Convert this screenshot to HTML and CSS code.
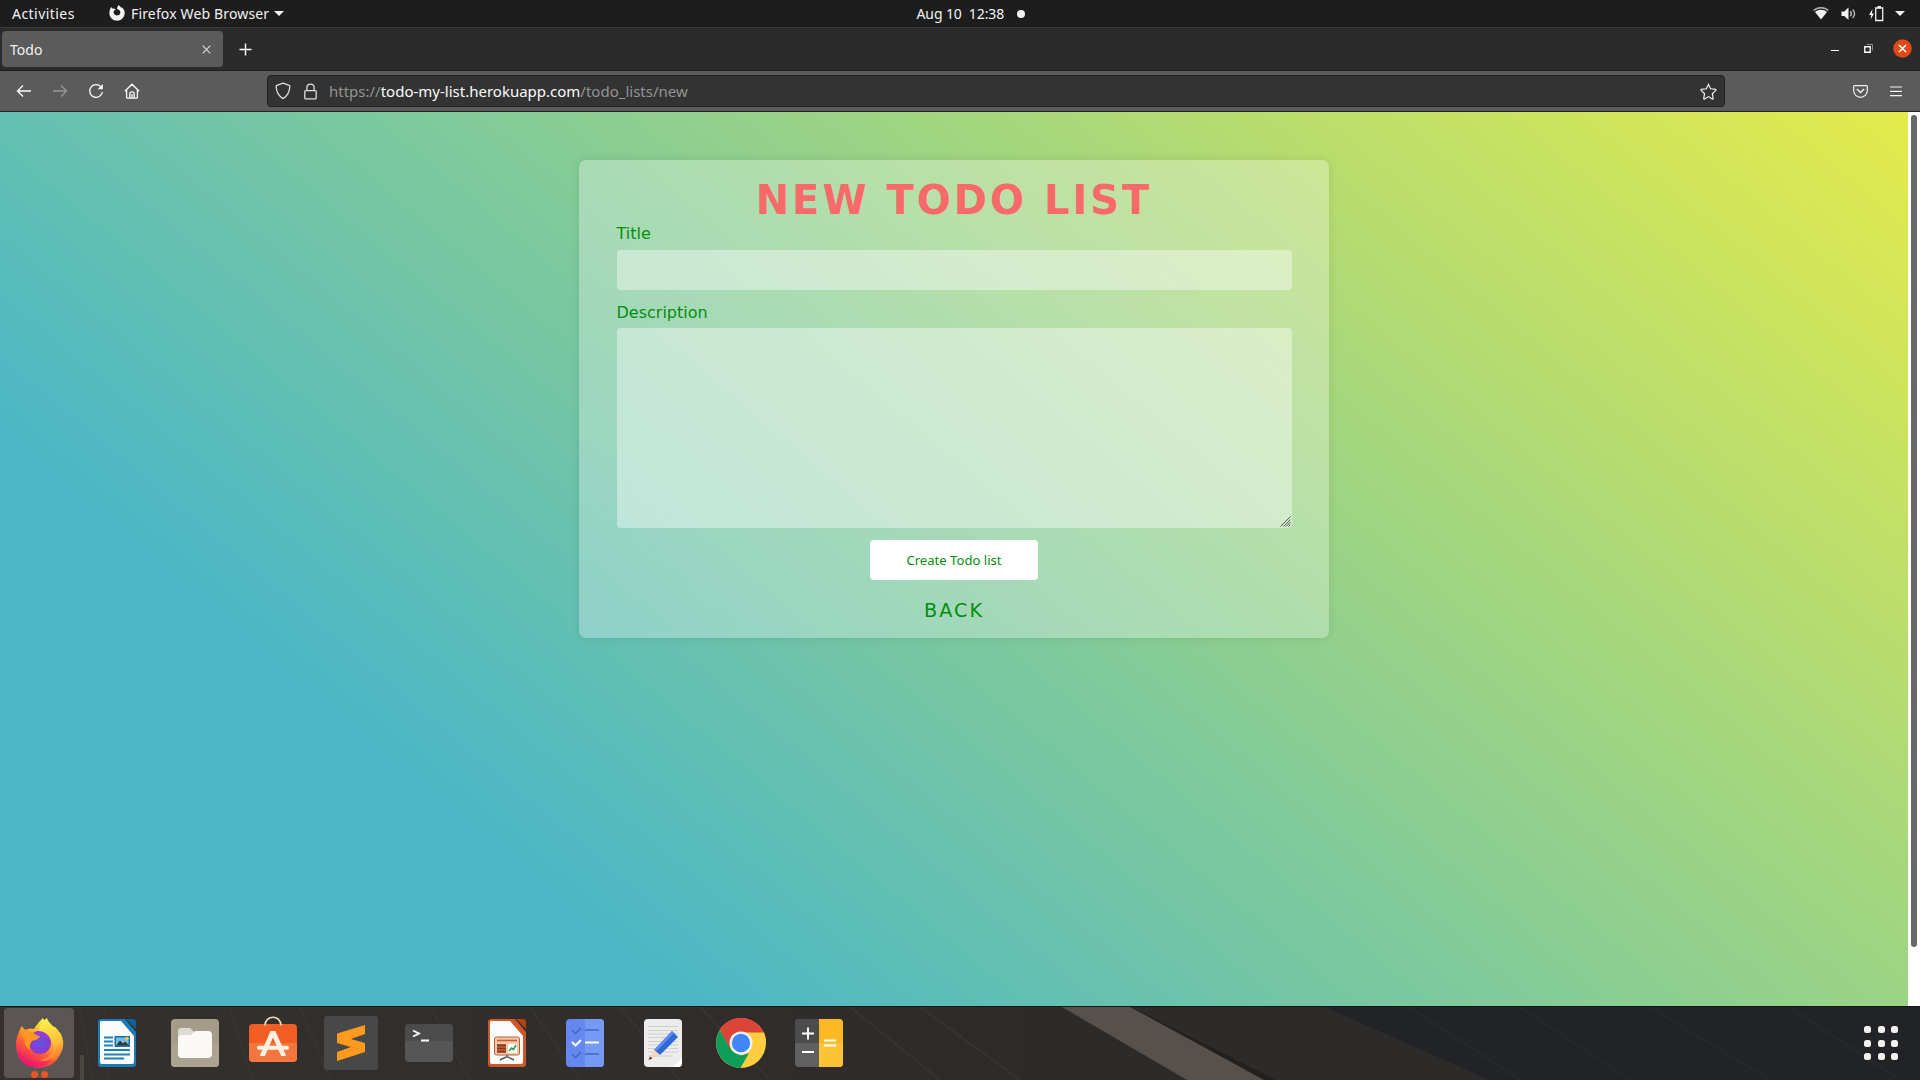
FILE: index.html
```html
<!DOCTYPE html>
<html lang="en">
<head>
<meta charset="utf-8">
<title>Todo</title>
<link rel="stylesheet" href="styles.css">
</head>
<body>
<div class="desktop">
  <header class="topbar">
    <div class="topbar-left">
      <span class="activities">Activities</span>
      <svg class="fox-glyph" width="16" height="16" viewBox="0 0 16 16"><path fill="#f2f2f2" fill-rule="evenodd" d="M8.2 2.5 9.6 0l2.2 2.2 1.5.6c1.700 1.400 2.500 3.500 2.400 5.500-.2 4.200-3.600 7.500-7.700 7.500S.4 12.500.4 8.300C.4 6 1 4 2.200 2.100l1 1.500 1.900-.2 1.700 1.400-1.900 1c-1 2.300.7 4.700 3.100 4.700 3 0 4.300-3 2.500-5.200L8.200 4z"/></svg>
      <span class="app-name">Firefox Web Browser</span>
      <span class="caret"></span>
    </div>
    <div class="clock"><span class="clock-date">Aug 10&nbsp; 12:38</span><span class="clock-dot"></span></div>
    <div class="tray">
      <svg width="16" height="14" viewBox="0 0 16 14"><path d="M.5 3.500C5-.3 11-.3 15.500 3.500" fill="none" stroke="#aaa" stroke-width="1.600"/><path d="M2 5c3.600-2.900 8.400-2.900 12 0l-6 7.500z" fill="#f2f2f2"/></svg>
      <svg width="16" height="14" viewBox="0 0 16 14"><path d="M.5 4.500h2.800L7.500.5v12.500L3.300 9H.5z" fill="#f2f2f2"/><path d="M9.300 4.300c1.300 1.500 1.300 3.500 0 5M11.600 2.500c2.600 2.400 2.600 6.200 0 8.600" fill="none" stroke="#bbb" stroke-width="1.400"/></svg>
      <svg width="15" height="16" viewBox="0 0 15 16"><path d="M3.500 3 0 9h2.200l-.6 4.500L5 7.500H2.900z" fill="#f2f2f2"/><path d="M6.700 2h7v12.500h-7zM8.500.7h3.400" fill="none" stroke="#f2f2f2" stroke-width="1.300"/></svg>
      <span class="caret"></span>
    </div>
  </header>

  <div class="tabstrip">
    <div class="tab"><span>Todo</span><svg width="9" height="9" viewBox="0 0 9 9"><path d="M.7.7l7.600 7.600M8.300.7.7 8.300" stroke="#ddd" stroke-width="1.100"/></svg></div>
    <svg class="newtab" width="13" height="13" viewBox="0 0 13 13"><path d="M6.500.5v12M.5 6.500h12" stroke="#fff" stroke-width="1.400"/></svg>
    <div class="window-buttons">
      <span class="minimize"></span>
      <svg width="9" height="9" viewBox="0 0 9 9"><path d="M2.500.5h6v6" fill="none" stroke="#888"/><path d="M.75 2.750h5.500v5.500H.75z" fill="none" stroke="#fff" stroke-width="1.300"/></svg>
      <svg width="19" height="19" viewBox="0 0 19 19"><circle cx="9.500" cy="9.500" r="9.300" fill="#e0491a"/><path d="M6 6l7 7M13 6l-7 7" stroke="#fff" stroke-width="1.500"/></svg>
    </div>
  </div>

  <div class="toolbar">
    <div class="nav">
      <svg width="16" height="16" viewBox="0 0 16 16"><path d="M15 8H1.500M7 2.500 1.500 8 7 13.500" fill="none" stroke="#fbfbfb" stroke-width="1.300"/></svg>
      <svg width="16" height="16" viewBox="0 0 16 16"><path d="M1 8h13.500M9 2.500 14.500 8 9 13.500" fill="none" stroke="#969696" stroke-width="1.300"/></svg>
      <svg width="16" height="16" viewBox="0 0 16 16"><path d="M12.800 3.600A6.400 6.400 0 1 0 14.400 9" fill="none" stroke="#fbfbfb" stroke-width="1.300"/><path d="M14.800 1v5.200H9.600z" fill="#fbfbfb"/></svg>
      <svg width="16" height="16" viewBox="0 0 16 16"><path d="M.8 8.300 8 1.200l7.200 7.100M2.600 7v7.200c0 .6.400.9.900.9h9c.5 0 .9-.4.900-.9V7M5.800 15v-4.200c0-1.300.9-2 2.200-2s2.200.7 2.200 2V15M8 11v4" fill="none" stroke="#fbfbfb" stroke-width="1.300"/></svg>
    </div>
    <div class="urlbar">
      <svg width="16" height="18" viewBox="0 0 16 18"><path d="M8 1.200 14.200 3.300c.5 0 .6.400.6.800 0 5.200-1.700 9.500-6.800 12.500C2.900 13.600 1.200 9.300 1.200 4.100c0-.4.200-.7.600-.8z" fill="none" stroke="#ddd" stroke-width="1.300"/></svg>
      <svg class="lock" width="13" height="17" viewBox="0 0 13 17"><path d="M1.700 7.700h9.600c.5 0 .9.400.9.900v6.300c0 .6-.4 1-.9 1H1.700c-.5 0-.9-.4-.9-1V8.600c0-.5.400-.9.900-.9zM2.900 7.500V4.600c0-4.700 7.200-4.700 7.200 0v2.900" fill="none" stroke="#ddd" stroke-width="1.300"/></svg>
      <span class="url"><span class="dim">https://</span><span class="host">todo-my-list.herokuapp.com</span><span class="dim path">/todo_lists/new</span></span>
      <svg class="star" width="17" height="17" viewBox="0 0 17 17"><path d="M8.500 1.400l2.100 4.400 4.900.6c.6.100.7.600.3 1l-3.500 3.300.9 4.600c.1.600-.4.900-.9.600L8.500 13.600l-3.900 2.300c-.5.300-1 0-.9-.6l.9-4.600L1.200 7.400c-.4-.4-.3-.9.3-1l4.900-.6z" fill="none" stroke="#f0f0f0" stroke-width="1.200"/></svg>
    </div>
    <div class="tools">
      <svg width="15" height="15" viewBox="0 0 15 15"><path d="M1.600 1.600h11.800c.5 0 .9.400.9.900v4c0 3.900-3.100 6.800-6.800 6.800S.7 10.400.7 6.500v-4c0-.5.4-.9.9-.9z" fill="none" stroke="#f0f0f0" stroke-width="1.200"/><path d="M3.900 5l3.600 3.500L11.100 5" fill="none" stroke="#f0f0f0" stroke-width="1.500"/></svg>
      <svg width="12" height="11" viewBox="0 0 12 11"><path d="M0 1h12M0 5.300h12M0 9.600h12" stroke="#f5f5f5" stroke-width="1.200"/></svg>
    </div>
  </div>

  <div class="viewport">
    <main class="page">
      <section class="card">
        <h1>New Todo List</h1>
        <label for="title">Title</label>
        <input id="title" class="field" type="text">
        <label for="description">Description</label>
        <div class="area-wrap">
          <textarea id="description" class="field area"></textarea>
          <svg class="grip" width="11" height="11" viewBox="0 0 11 11"><path d="M.5 10.500l10-10M3.500 10.500l7-7M6 10.500l4.500-4.500M8.500 10.500l2-2" stroke="#555" stroke-width="1"/></svg>
        </div>
        <button class="submit" type="button">Create Todo list</button>
        <a class="back">Back</a>
      </section>
    </main>
    <div class="scrollbar"><div class="thumb"></div></div>
  </div>

  <footer class="dock">
    <svg class="wallpaper" width="1920" height="73" viewBox="0 0 1920 73">
      <path d="M1130 0H1325L1490 73H1263z" fill="#2c2b2a"/>
      <path d="M1325 0H1920V73H1490z" fill="#212326"/>
      <path d="M1062 0H1130L1265 73H1187z" fill="#58504b"/>
      <path d="M1131 0l50 25 95 48h-12z" fill="#222120"/>
      <path d="M80 0l12 73M105 0l3 73M230 0l22 73M300 0l30 73M430 0l40 73M530 0l50 73M620 0l60 73M700 0l70 73M850 0l90 73M920 0l100 73" stroke="#3b3734" stroke-width="2" opacity=".6"/>
      <path d="M80 48h4v25h-4z" fill="#49453f"/>
      <path d="M1410 0l110 73M1520 0l110 73M1650 0l120 73M1790 0l110 73" stroke="#242629" stroke-width="4"/>
    </svg>
    <div class="apps">
      <div class="app active">
        <svg class="firefox" width="54" height="54" viewBox="0 0 54 54">
          <defs>
            <linearGradient id="ff" x1=".8" y1=".1" x2=".3" y2="1"><stop offset="0" stop-color="#fff44f"/><stop offset=".35" stop-color="#ffb02c"/><stop offset=".65" stop-color="#ff5a36"/><stop offset="1" stop-color="#e5127a"/></linearGradient>
            <linearGradient id="fy" x1=".5" y1="0" x2=".7" y2="1"><stop offset="0" stop-color="#fff04e"/><stop offset=".6" stop-color="#ffbd35"/><stop offset="1" stop-color="#ff6a30"/></linearGradient>
            <radialGradient id="fp"><stop offset="0" stop-color="#5f55e8"/><stop offset="1" stop-color="#9038cc"/></radialGradient>
          </defs>
          <path d="M8.500 10c1 2 2 3 3.500 4 3-1.500 6-2 9-1 2-3 3-5 9-11 2 4 4 6 7 8l5 1c8 7 9 18 6 25-4 11-13 16-22 16C12 52 3 43 3 29c0-7 2-11 5.500-19z" fill="url(#ff)"/>
          <path d="M34 2c-7 5-8 9-7 14 8 1 13 8 13 14 0 9-7 14-14 14 12 4 22-2 24-13 1-7-1-11-3-15l-1 3c-2-8-10-10-12-17z" fill="url(#fy)"/>
          <circle cx="27" cy="27" r="11" fill="url(#fp)"/>
          <path d="M20 17c4-3 9-2 12 0 3 2 5 5 5 8-4-5-9-6-13-5z" fill="#9b3cd1"/>
          <path d="M9 10c1 3 5 5 11 6 1 2 4 4 7 4-1 3-4 4-8 5-2 3-3 5-2 9-4-2-6-7-5-11-3-2-5-7-3-13z" fill="#ff9724"/>
          <path d="M5 32c4 13 22 18 34 10-4 7-12 10-19 8C11 48 6 42 5 32z" fill="#f01969" opacity=".55"/>
        </svg>
        <span class="dots"><i></i><i></i></span>
      </div>
      <div class="app">
        <svg width="38" height="48" viewBox="0 0 38 48"><path d="M3 0h24l11 13v32q0 3-3 3H3q-3 0-3-3V3q0-3 3-3z" fill="#1b7bb5"/><path d="M3 2h20l13 15v26q0 2-2 2H4q-2 0-2-2V4q0-2 1-2z" fill="#fcfcfc"/><path d="M28 0h7q3 0 3 3v7z" fill="#0c639c"/><path d="M6 18.500h9M6 22.500h9M6 26.500h9M6 31h26M6 35.500h26M6 39.500h20" stroke="#1e7fb9" stroke-width="1.800"/><path d="M16.500 17h15.500v11H16.500z" fill="#1670a8"/><path d="M18 18.500h12.500v8H18z" fill="#74bde4"/><path d="M18 26.500l4-5 3 3 2-2 4 4z" fill="#333"/><circle cx="29" cy="19.500" r="1.700" fill="#ffc920"/></svg>
      </div>
      <div class="app">
        <svg width="48" height="48" viewBox="0 0 48 48"><rect width="48" height="48" rx="4" fill="#a49c89"/><path d="M0 24h48v20q0 4-4 4H4q-4 0-4-4z" fill="#aba391"/><path d="M7 13q0-4 3-4h9l4 4h15v12H7z" fill="#dedbd2"/><path d="M11 16h9l4-4h13q4 0 4 4v19q0 4-4 4H11q-4 0-4-4V20q0-4 4-4z" fill="#faf9f7"/></svg>
      </div>
      <div class="app">
        <svg class="software" width="48" height="48" viewBox="0 0 48 48"><rect y="5" width="48" height="38" rx="4" fill="#f15d22"/><path d="M0 24h48v15q0 4-4 4H4q-4 0-4-4z" fill="#f4763f"/><path d="M16 6.500C16-4.500 32-4.500 32 6.500" fill="none" stroke="#f6dfbd" stroke-width="1.600"/><path d="M21.500 12h5l10.800 25h-5.200L24 18.500 15.900 37h-5.200z" fill="#fff0e2"/><path d="M10 28.800h28" stroke="#fff0e2" stroke-width="4" stroke-linecap="round"/></svg>
      </div>
      <div class="app">
        <svg width="54" height="54" viewBox="0 0 54 54"><rect width="54" height="54" rx="3" fill="#484848"/><path d="M13 17.500 41 9v9L27 23l14 4v9L13 45v-9l14-5-14-4z" fill="#ff9a1e"/><path d="M13 26.500l28 8L27 31z" fill="#df7913"/></svg>
      </div>
      <div class="app">
        <svg width="48" height="48" viewBox="0 0 48 48"><rect y="5" width="48" height="38" rx="4" fill="#565656"/><path d="M0 22V9q0-4 4-4h40q4 0 4 4v13z" fill="#4b4b4b"/><path d="M8 11.500l6 3-6 3M16 21.500h8" fill="none" stroke="#fff" stroke-width="1.800"/></svg>
      </div>
      <div class="app">
        <svg width="38" height="48" viewBox="0 0 38 48"><path d="M3 0h24l11 13v32q0 3-3 3H3q-3 0-3-3V3q0-3 3-3z" fill="#cc5728"/><path d="M3 2h19l13 15v26q0 2-2 2H4q-2 0-2-2V4q0-2 1-2z" fill="#fcfcfc"/><path d="M28 0h7q3 0 3 3v7z" fill="#b44111"/><rect x="6.500" y="18" width="25" height="18" rx="2" fill="#f5c7aa" stroke="#b95c35"/><path d="M9 21.500h20" stroke="#c75f31" stroke-width="1.600"/><path d="M9 26.500h9M9 29.500h9M9 32.500h9" stroke="#8e3815" stroke-width="2.300"/><path d="M20 25h9v9h-9z" fill="#fff"/><path d="M21 32l2.500-3 2 1.500L28 26" fill="none" stroke="#28a34a" stroke-width="1.600"/><path d="M19 36v2M12 41l7-3.500 7 3.500" fill="none" stroke="#555" stroke-width="1.400"/></svg>
      </div>
      <div class="app">
        <svg width="38" height="48" viewBox="0 0 38 48"><rect width="38" height="48" rx="4" fill="#6488ef"/><path d="M19 0h15q4 0 4 4v40q0 4-4 4H19z" fill="#759af6"/><path d="M6 11l3.500 3.500L15 9M19 11h14M6 35l3.500 3.500L15 33M19 35h14" fill="none" stroke="#4668bd" stroke-width="1.600"/><path d="M6 23l3.500 3.500L15 21M19 23.500h14" fill="none" stroke="#fff" stroke-width="2"/></svg>
      </div>
      <div class="app">
        <svg width="38" height="48" viewBox="0 0 38 48"><rect width="38" height="48" rx="4" fill="#ececec"/><path d="M4 7.500h30M4 11.500h30M4 15h30M4 18.500h30M4 22.500h30M4 26h30M4 29.500h30M4 33h30M4 37h25" stroke="#cfcfcf"/><path d="M29 48l9-9v5q0 4-4 4z" fill="#fff"/><path d="M10 31l18-19 6 6-18 18z" fill="#2f66d8"/><path d="M10 31l18-19 2 2-18 19z" fill="#5a8df0"/><path d="M10 31l6 5-11 5z" fill="#f7d6b6"/><path d="M6.200 37.500l2 2L4.500 41z" fill="#333"/></svg>
      </div>
      <div class="app">
        <svg width="50" height="50" viewBox="0 0 50 50"><circle cx="25" cy="25" r="25" fill="#ffcd40"/><path d="M25 25 14.200 31.200 3.700 12A25 25 0 0 1 48 15H25z" fill="#db4437"/><path d="M3.700 12 14.600 31.200 25 37.500l8-2.500-8.500 15A25 25 0 0 1 3.700 12z" fill="#109d58"/><path d="M25 14.500h23q2 5 2 9l-14 0z" fill="#ffcd40"/><circle cx="25" cy="25" r="11.500" fill="#f3f3f3"/><circle cx="25" cy="25" r="9.200" fill="#4286f5"/></svg>
      </div>
      <div class="app">
        <svg width="48" height="48" viewBox="0 0 48 48"><rect width="48" height="48" rx="4" fill="#606060"/><path d="M0 24V4q0-4 4-4h20v24z" fill="#4c4c4c"/><path d="M24 0h20q4 0 4 4v40q0 4-4 4H24z" fill="#fcb924"/><path d="M24 24h24v20q0 4-4 4H24z" fill="#fec437"/><path d="M7 14.500h12M13 8.500v12M7 33h12M29 21.500h12M29 26.500h12" stroke="#fff" stroke-width="1.900"/></svg>
      </div>
    </div>
    <div class="app-grid"><i></i><i></i><i></i><i></i><i></i><i></i><i></i><i></i><i></i></div>
  </footer>
</div>
</body>
</html>
```
FILE: styles.css
```css
* { box-sizing: border-box; }
body { margin: 0; overflow: hidden; }
svg { display: block; flex: none; }

.desktop {
  width: 1920px;
  height: 1080px;
  display: flex;
  flex-direction: column;
  font-family: "Noto Sans", sans-serif;
  font-size: 14px;
  color: #f2f2f2;
  white-space: nowrap;
}

/* system bar */
.topbar {
  height: 28px;
  flex: none;
  display: grid;
  grid-template-columns: 1fr auto 1fr;
  align-items: center;
  background: #1d1d1d;
  border-bottom: 1px solid #3b3b3b;
}
.topbar-left { display: flex; align-items: center; padding-left: 12px; }
.activities { width: 97px; letter-spacing: 0.45px; }
.fox-glyph { margin-top: -2px; }
.app-name { width: 137px; margin: 0 6px; letter-spacing: 0.15px; }
.caret { border: 5px solid transparent; border-top-color: #f2f2f2; border-bottom: 0; }
.clock { display: flex; align-items: center; padding-left: 21px; }
.clock-date { width: 88px; letter-spacing: -0.1px; }
.clock-dot { width: 8px; height: 8px; margin-left: 12px; border-radius: 50%; background: #f2f2f2; }
.tray { display: flex; align-items: center; justify-content: flex-end; gap: 12px; padding-right: 15px; }
.tray svg { position: relative; left: 1px; }

/* tabs */
.tabstrip {
  height: 43px;
  flex: none;
  display: flex;
  align-items: center;
  padding: 0 8.5px 2px 2px;
  background: #2b2b2b;
  border-bottom: 1px solid #1e1e1e;
}
.tab {
  width: 221px;
  height: 36px;
  margin-top: 2px;
  padding: 0 12px 0 8px;
  display: flex;
  align-items: center;
  justify-content: space-between;
  border-radius: 4px;
  background: #5b5b5b;
}
.newtab { margin: 2px 0 0 16px; }
.window-buttons { display: flex; align-items: center; gap: 20px; margin: 1px 0 0 auto; }
.minimize { width: 8px; height: 1px; margin: 4px 5px 0 0; background: #fff; }

/* navigation */
.toolbar {
  height: 41px;
  flex: none;
  display: flex;
  align-items: center;
  background: #5b5b5b;
  border-bottom: 1px solid #242424;
}
.nav { width: 267px; display: flex; gap: 20px; padding-left: 16px; }
.urlbar {
  width: 1458px;
  height: 32px;
  display: flex;
  align-items: center;
  padding: 0 7px;
  background: #333;
  border: 1px solid #222;
  border-radius: 4px;
}
.lock { margin-left: 13px; }
.url { margin-left: 12px; font-size: 15px; color: #fbfbfb; }
.dim { color: #949494; }
.star { margin-left: auto; }
.tools { flex: 1; display: flex; align-items: center; justify-content: flex-end; gap: 22px; padding-right: 18px; }

/* web page */
.viewport { flex: 1; min-height: 0; display: flex; overflow: hidden; }
.page {
  width: 1908px;
  height: 960px;
  padding-top: 48px;
  background: linear-gradient(40deg, #4bb7c6 25%, #91d08d 60%, #e4eb4b 100%);
  font-family: "DejaVu Sans", sans-serif;
  font-size: 16px;
  color: #058f0a;
}
.card {
  width: 750px;
  height: 478px;
  margin: 0 auto;
  padding: 16px 37.5px 0;
  display: flex;
  flex-direction: column;
  border-radius: 7px;
  background: rgba(255, 255, 255, 0.29);
  box-shadow: 0 0 10px rgba(0, 0, 0, 0.1);
}
h1 {
  margin: 0;
  height: 48px;
  line-height: 49px;
  text-align: center;
  text-transform: uppercase;
  font-size: 40px;
  letter-spacing: 3px;
  color: #f86a69;
}
label { line-height: 19px; }
.field {
  display: block;
  width: 675px;
  border: 0;
  border-radius: 4px;
  outline: 0;
  background: rgba(255, 255, 255, 0.4);
}
input.field { height: 40px; margin: 7px 0 13px; }
.area-wrap { position: relative; margin-top: 6px; }
.area { height: 200px; resize: none; }
.grip { position: absolute; right: 0.5px; bottom: 1px; }
.submit {
  width: 168px;
  height: 40px;
  margin: 12px auto 0;
  border: 0;
  border-radius: 4px;
  background: #fff;
  color: #058f0a;
  font: 13.1px "Noto Sans", sans-serif;
}
.back { margin-top: 19px; text-align: center; text-transform: uppercase; font-size: 19.2px; line-height: 24px; letter-spacing: 2px; }
.scrollbar { width: 12px; padding: 3px; background: #fff; }
.thumb { width: 6px; height: 832px; border-radius: 3px; background: #686868; }

/* dock */
.dock {
  position: relative;
  height: 74px;
  flex: none;
  display: flex;
  align-items: center;
  justify-content: space-between;
  padding: 0 22px 1px 0;
  background: linear-gradient(90deg, #35302d, #2d2b2a 55%, #292725);
  border-top: 1px solid #161616;
}
.wallpaper { position: absolute; left: 0; top: 0; }
.apps, .app-grid { position: relative; }
.apps { display: flex; }
.app { width: 78px; height: 70px; display: flex; align-items: center; justify-content: center; }
.active { width: 70px; margin: 0 4px; border-radius: 4px; background: rgba(145, 140, 136, 0.42); position: relative; }
.firefox { margin-left: 1px; }
.software { overflow: visible; }
.dots { position: absolute; bottom: 0; display: flex; gap: 3px; }
.dots i { width: 7px; height: 7px; border-radius: 50%; background: #ee5522; }
.app-grid { display: grid; grid-template-columns: repeat(3, 7px); gap: 6.500px; }
.app-grid i { width: 7px; height: 7px; border-radius: 2.500px; background: #f2f1ee; }
```
